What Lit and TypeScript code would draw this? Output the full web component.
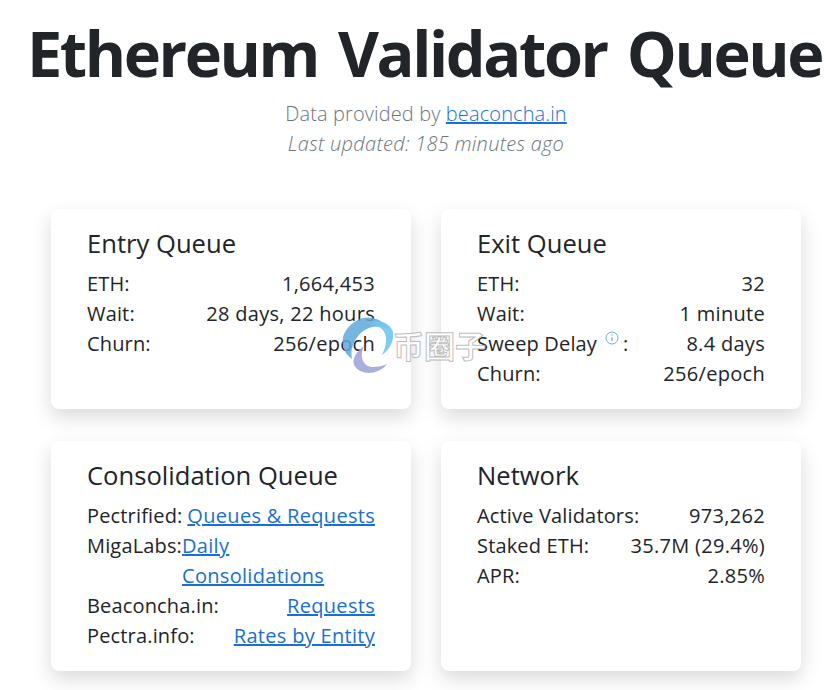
import { LitElement, html, css } from "lit";
import { customElement } from "lit/decorators.js";

@customElement("app-root")
export class AppRoot extends LitElement {
  static styles = css`
    :host { display: block; width: 834px; height: 690px; overflow: hidden; position: relative; background: #fff; color: #212529; font-family: "Open Sans", "Noto Sans", sans-serif; font-size: 20px; line-height: 30px; letter-spacing: .22px; box-sizing: border-box; padding-left: 18px; }
    .head { text-align: center; padding-top: 15px; }
    h1 { margin: 0 0 0 -3px; font-size: 63px; line-height: 75px; font-weight: 700; white-space: nowrap; letter-spacing: -2.4px; word-spacing: 6px; }
    .sub { margin-top: 9px; font-weight: 300; color: #6c757d; letter-spacing: .12px; }
    .sub.i { margin-top: 0; font-style: italic; letter-spacing: .27px; }
    a { color: #1a6fd4; text-decoration: underline; }
    .grid { display: grid; grid-template-columns: 360px 360px; gap: 32px 30px; margin: 50px 0 0 33px; }
    .card { background: #fff; border-radius: 8px; box-shadow: 0 8px 20px rgba(0,0,0,.15); padding: 17px 36px; box-sizing: border-box; height: 200px; }
    .card.tall { height: 230px; }
    h2 { margin: 0 0 7px; font-size: 25.6px; line-height: 36px; font-weight: 400; letter-spacing: 0; }
    .row { display: flex; justify-content: space-between; }
    .row > span:first-child { flex-shrink: 0; letter-spacing: .16px; }
    .row .v { text-align: right; letter-spacing: .3px; }
    .row .left { text-align: left; }
    .info { display: inline-block; vertical-align: 6px; margin-left: 8px; margin-right: 4px; }
    .wm { position: absolute; left: 342px; top: 315px; display: flex; align-items: center; }
    .wm span { font-family: "Noto Sans CJK SC", sans-serif; font-size: 31px; line-height: 36px; font-weight: 700; letter-spacing: 0; color: rgba(255,255,255,.88); -webkit-text-stroke: 1px rgba(160,160,160,.7); margin-left: -2px; }
  `;

  render() {
    return html`
      <div class="head">
        <h1>Ethereum Validator Queue</h1>
        <div class="sub">Data provided by <a href="#">beaconcha.in</a></div>
        <div class="sub i">Last updated: 185 minutes ago</div>
      </div>
      <div class="grid">
        <div class="card">
          <h2>Entry Queue</h2>
          <div class="row"><span>ETH:</span><span class="v">1,664,453</span></div>
          <div class="row"><span>Wait:</span><span class="v">28 days, 22 hours</span></div>
          <div class="row"><span>Churn:</span><span class="v">256/epoch</span></div>
        </div>
        <div class="card">
          <h2>Exit Queue</h2>
          <div class="row"><span>ETH:</span><span class="v">32</span></div>
          <div class="row"><span>Wait:</span><span class="v">1 minute</span></div>
          <div class="row"><span>Sweep Delay<svg class="info" width="14" height="14" viewBox="0 0 14 14" fill="none" stroke="#6ea8dc"><circle cx="7" cy="7" r="6"/><path d="M7 6v4.2M7 3.6v1.2" stroke-width="1.2"/></svg>:</span><span class="v">8.4 days</span></div>
          <div class="row"><span>Churn:</span><span class="v">256/epoch</span></div>
        </div>
        <div class="card tall">
          <h2>Consolidation Queue</h2>
          <div class="row"><span>Pectrified:</span><a class="v" href="#">Queues &amp; Requests</a></div>
          <div class="row"><span>MigaLabs:</span><a class="v left" href="#">Daily Consolidations</a></div>
          <div class="row"><span>Beaconcha.in:</span><a class="v" href="#">Requests</a></div>
          <div class="row"><span>Pectra.info:</span><a class="v" href="#">Rates by Entity</a></div>
        </div>
        <div class="card tall">
          <h2>Network</h2>
          <div class="row"><span>Active Validators:</span><span class="v">973,262</span></div>
          <div class="row"><span>Staked ETH:</span><span class="v">35.7M (29.4%)</span></div>
          <div class="row"><span>APR:</span><span class="v">2.85%</span></div>
        </div>
      </div>
      <div class="wm">
        <svg width="53" height="60" viewBox="0 0 53 60" fill="none">
          <path d="M47 14C40 3 25-1 14 6 4 12-1 22 1 30c1 7 5 11 9 14-2-10 2-20 10-27 8-6 18-7 27-3Z" fill="#5fa8dc" opacity=".85"/>
          <path d="M28 9c10-5 20-1 23 8 1 9-3 17-11 23 5-10 6-20 0-26-4-3-8-4-12-5Z" fill="#6ec6ee" opacity=".9"/>
          <path d="M22 31c-8 6-12 13-10 19 4 8 16 10 24 6 4-2 7-4 9-7-7 3-17 5-22 0-4-5-4-12-1-18Z" fill="#9fa6d8" opacity=".9"/>
        </svg>
        <span>币圈子</span>
      </div>
    `;
  }
}
